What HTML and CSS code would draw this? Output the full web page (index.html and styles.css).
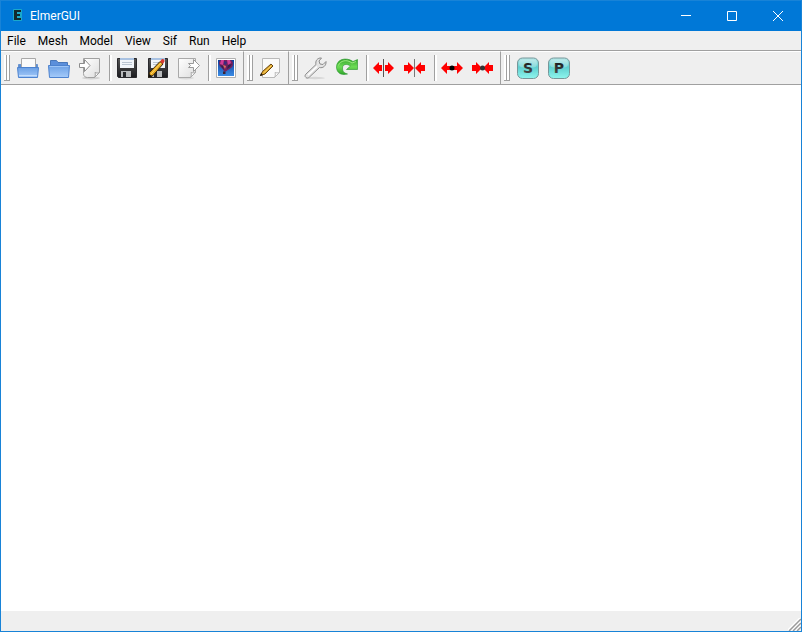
FILE: index.html
```html
<!DOCTYPE html>
<html lang="en">
<head>
<meta charset="utf-8">
<title>ElmerGUI</title>
<link rel="stylesheet" href="styles.css">
</head>
<body>
<svg class="defs" aria-hidden="true">
  <defs>
    <linearGradient id="blue" x1="0" y1="0" x2="0" y2="1"><stop offset="0" stop-color="#6a9fe4"/><stop offset="1" stop-color="#a5cbfa"/></linearGradient>
    <linearGradient id="paper" x1="0" y1="0" x2="1" y2="1"><stop offset="0" stop-color="#fff"/><stop offset="1" stop-color="#dedede"/></linearGradient>
    <linearGradient id="dark" x1="0" y1="0" x2="0" y2="1"><stop offset="0" stop-color="#555"/><stop offset="1" stop-color="#1c1c20"/></linearGradient>
    <linearGradient id="sky" x1="0" y1="0" x2="0" y2="1"><stop offset="0" stop-color="#0b3f9c"/><stop offset="1" stop-color="#3a8be4"/></linearGradient>
    <linearGradient id="green" x1="0" y1="0" x2="0" y2="1"><stop offset="0" stop-color="#35a52c"/><stop offset=".5" stop-color="#6ddc55"/><stop offset="1" stop-color="#2fa52a"/></linearGradient>
    <linearGradient id="aqua" x1="0" y1="0" x2="0" y2="1"><stop offset="0" stop-color="#b5e6e6"/><stop offset=".45" stop-color="#5fcfd0"/><stop offset="1" stop-color="#8ff6ee"/></linearGradient>
    <linearGradient id="ink" x1="0" y1="0" x2="0" y2="1"><stop offset="0" stop-color="#111"/><stop offset="1" stop-color="#555"/></linearGradient>
    <g id="floppy">
      <path d="M2.500 2.500h19v19h-18l-1-1z" fill="url(#dark)" stroke="#29292d"/>
      <path d="M5 2h14v10H5z" fill="#f1f5fa"/>
      <path d="M5 2h14v2H5z" fill="#a9c2e2"/>
      <path d="M7 6.500h10M7 8.500h10" stroke="#bac5d2"/>
      <path d="M6 15h10v6H6z" fill="#b9bbbd"/>
      <path d="M8 16h3v5H8z" fill="#27282c"/>
    </g>
    <path id="arrow-left" d="M0 6 6 0v3h4v6H6v3z" fill="#f00"/>
    <path id="arrow-right" d="M10 6 4 0v3H0v6h4v3z" fill="#f00"/>
    <path id="edge-left" d="M0 6 6 0v4h4v4H6v4z" fill="#f00"/>
    <path id="edge-right" d="M10 6 4 0v4H0v4h4v4z" fill="#f00"/>
  </defs>
</svg>
<div class="window">
  <header class="titlebar">
    <svg class="app-icon" viewBox="0 0 16 16" aria-hidden="true"><rect x="4" y="1" width="9" height="12" rx="1" fill="#1aa9cc"/><path d="M5 2h7v2H8v2h3v2H8v2h4v2H5z" fill="#12282f"/></svg>
    <h1 class="title">ElmerGUI</h1>
    <div class="controls">
      <button class="control" aria-label="Minimize"><svg viewBox="0 0 10 10"><path d="M0 4.500h10"/></svg></button>
      <button class="control" aria-label="Maximize"><svg viewBox="0 0 10 10"><path d="M.5.5h9v9h-9z"/></svg></button>
      <button class="control" aria-label="Close"><svg viewBox="0 0 10 10"><path d="m0 0 10 10M10 0 0 10"/></svg></button>
    </div>
  </header>
  <nav class="menubar">
    <button class="menu">File</button>
    <button class="menu">Mesh</button>
    <button class="menu">Model</button>
    <button class="menu">View</button>
    <button class="menu">Sif</button>
    <button class="menu">Run</button>
    <button class="menu">Help</button>
  </nav>
  <div class="toolbars">
    <div class="toolbar" role="toolbar" aria-label="File">
      <span class="grip"></span>
      <button class="tool" aria-label="Open"><svg viewBox="0 0 24 24">
        <path d="M2.500 12V8.500h19V12z" fill="#5b8ed4" stroke="#6a93cc"/>
        <path d="M5.500 2.500h14v11h-14z" fill="#fafafa" stroke="#a8a8a8"/>
        <path d="M1.500 11.500h21l-1 10h-19z" fill="url(#blue)" stroke="#4c82cf"/>
        <path d="M3 19.500h18" stroke="#c3ddfc"/>
      </svg></button>
      <button class="tool" aria-label="Load project"><svg viewBox="0 0 24 24">
        <path d="M3.500 12V4.500h6l1.500 2h9.500V12z" fill="#5b8fdb" stroke="#4877b9"/>
        <path d="M1.500 9.500h21l-1 12h-19z" fill="url(#blue)" stroke="#4c82cf"/>
        <path d="M2.500 10.500h19" stroke="#9cc4f6"/>
      </svg></button>
      <button class="tool" aria-label="Import mesh"><svg viewBox="0 0 24 24">
        <ellipse cx="13" cy="22" rx="9" ry="1.500" fill="#d2d2d2"/>
        <path d="M5.500 2.500h16v14l-5 5h-7c-2 0-4-1-4-4z" fill="url(#paper)" stroke="#a0a0a0"/>
        <path d="M21.500 16.500c-2 1-3 .5-4.500 0 .5 2 .5 3-.5 5z" fill="#fff" stroke="#a0a0a0"/>
        <path d="M1.500 7.500h5v-4l5.500 6-5.500 6v-4h-5z" fill="#fff" stroke="#8d8d8d"/>
      </svg></button>
      <span class="separator"></span>
      <button class="tool" aria-label="Save"><svg viewBox="0 0 24 24"><use href="#floppy"/></svg></button>
      <button class="tool" aria-label="Save as"><svg viewBox="0 0 24 24"><use href="#floppy"/>
        <path d="m2.500 21.500 1-5L14 5.500l3 2.500L7 19.500z" fill="#e8aa22" stroke="#35240c"/>
        <path d="M5 18 15 7" stroke="#ffda6b"/>
        <path d="m14 5.500 2-2.500c1.500-.5 3 1 2.500 2.500L17 8z" fill="#d83c32"/>
        <path d="m2 22 1-4 3 2z" fill="#111"/>
      </svg></button>
      <button class="tool" aria-label="Export mesh"><svg viewBox="0 0 24 24">
        <ellipse cx="9" cy="22" rx="8" ry="1.500" fill="#dadada"/>
        <path d="M1.500 2.500h17v14l-5 5h-12z" fill="url(#paper)" stroke="#a9a9a9"/>
        <path d="M18.500 16.500c-2 .5-3 .5-4.500 0 .5 2 .5 3-.5 5z" fill="#fff" stroke="#aaa"/>
        <path d="M11.500 7.500h5v-4l6 6-6 6v-4h-5l2-2z" fill="#fff" stroke="#9a9a9a"/>
      </svg></button>
      <span class="separator"></span>
      <button class="tool" aria-label="Save picture"><svg viewBox="0 0 24 24">
        <path d="M2.500 2.500h19v19h-19z" fill="#fff" stroke="#b0b0b0"/>
        <path d="M4 4h16v16H4z" fill="url(#sky)"/>
        <path d="M5 7c0-2 1-3 3-3h8c2 0 3 2 3 4 0 4-4 5-7 7.500h-2C9 12 5 11 5 7z" fill="#74205f"/>
        <path d="M7 4h3l-1 5-3-1zM13 4h3l1 3-3 2z" fill="#d23c96"/>
        <path d="m10 5 3 1-1 3-2-1z" fill="#3a2b7c"/>
        <path d="m6 9 3 1 1 4zM14 9l4-1-2 3-3 2z" fill="#35204e"/>
        <path d="m9 9 3 1-1 3z" fill="#d9725c"/>
        <path d="M9 15.500h2.500V18H9z" fill="#3e2332"/>
      </svg></button>
    </div>
    <div class="toolbar" role="toolbar" aria-label="Edit">
      <span class="grip"></span>
      <button class="tool" aria-label="Edit sif"><svg viewBox="0 0 24 24">
        <path d="M3.500 2.500h17v14l-5 5h-12z" fill="#fafafa" stroke="#b9b9b9"/>
        <path d="M20.500 16.500c-2 .5-3 .5-4.500 0 .5 2 .5 3-.5 5z" fill="#fff" stroke="#b9b9b9"/>
        <path d="m1.500 19.500 2-4 8.500-7.500 2 2-8 8z" fill="#dda52c" stroke="#67450f"/>
        <path d="m4.500 17 8-7.500" stroke="#ffd66b"/>
        <path d="m1 20 1-3 2 2z" fill="#241a0e"/>
      </svg></button>
    </div>
    <div class="toolbar" role="toolbar" aria-label="Mesh">
      <span class="grip"></span>
      <button class="tool" aria-label="Configure"><svg viewBox="0 0 24 24">
        <ellipse cx="11" cy="22" rx="10" ry="1.200" fill="#d7d7d7"/>
        <path d="M2 21.500c-1.500-1-1-2.500 0-3.500l10-9.500C11 5 13.500 1.500 17.500 2l-2.500 3 1 3 3 .5 3-3c.5 4-3 7-6.500 6L5.500 21c-1 1-2.500 1.500-3.500.5z" fill="#e4e4e4" stroke="#8c8c8c"/>
        <path d="m4 19 9-8.500" stroke="#fff" stroke-width="1.500"/>
      </svg></button>
      <button class="tool" aria-label="Remesh"><svg viewBox="0 0 24 24">
        <path d="M9 18.500C4 18.500 1.500 15 1.500 11 1.500 3.500 10.500.5 18 5.500l4.500-2v10h-11l4-3.500C12 7.500 7.500 8 7.500 12c0 3 1 5 5 6z" fill="url(#green)" stroke="#24942a" stroke-opacity=".6"/>
        <path d="M3.500 9.500C5 4.500 12 3 17 7l4-1.500" fill="none" stroke="#9beb80"/>
      </svg></button>
      <span class="separator"></span>
      <button class="tool" aria-label="Divide surface"><svg viewBox="0 0 24 24"><use href="#arrow-left" x="1" y="6"/><use href="#arrow-right" x="12" y="6"/><path d="M10 6h3v12h-3z" fill="#efefef"/><path d="M11.500 3v18" stroke="#555"/></svg></button>
      <button class="tool" aria-label="Unify surface"><svg viewBox="0 0 24 24"><use href="#arrow-right" x="1" y="6"/><use href="#arrow-left" x="12" y="6"/><path d="M11.500 3v18" stroke="#777"/></svg></button>
      <span class="separator"></span>
      <button class="tool" aria-label="Divide edge"><svg viewBox="0 0 24 24"><use href="#edge-left" x="1" y="6"/><use href="#edge-right" x="13" y="6"/><path d="M10 11h4v2h-4z" fill="#400"/><circle cx="12" cy="12" r="2.500"/></svg></button>
      <button class="tool" aria-label="Unify edge"><svg viewBox="0 0 24 24"><use href="#arrow-right" x="1" y="6"/><use href="#arrow-left" x="12" y="6"/><circle cx="11.500" cy="12" r="2.500" fill="#333"/></svg></button>
    </div>
    <div class="toolbar toolbar-last" role="toolbar" aria-label="Solver">
      <span class="grip"></span>
      <button class="tool" aria-label="Start solver"><svg viewBox="0 0 24 24">
        <rect x="1.500" y="2" width="21" height="20.500" rx="5" fill="url(#aqua)" stroke="#76979a"/>
        <rect x="3" y="3.500" width="18" height="8" rx="4" fill="#fff" opacity=".25"/>
        <text class="letter" x="12" y="17">S</text>
      </svg></button>
      <button class="tool" aria-label="Start postprocessor"><svg viewBox="0 0 24 24">
        <rect x="1.500" y="2" width="21" height="20.500" rx="5" fill="url(#aqua)" stroke="#76979a"/>
        <rect x="3" y="3.500" width="18" height="8" rx="4" fill="#fff" opacity=".25"/>
        <text class="letter" x="12" y="17">P</text>
      </svg></button>
    </div>
  </div>
  <main class="viewport"></main>
  <footer class="statusbar">
    <svg class="size-grip" viewBox="0 0 13 13" aria-hidden="true"><path d="M0 13 13 0M4 13l9-9M8 13l5-5" stroke="#fff" stroke-width="3"/><path d="M1 13 13 1M5 13l8-8M9 13l4-4" stroke="#9b9b9b" stroke-width="1.500"/></svg>
  </footer>
</div>
</body>
</html>
```
FILE: styles.css
```css
* {
  box-sizing: border-box;
}

body {
  margin: 0;
  font: 12px/16px Roboto, "Open Sans", sans-serif;
  color: #000;
}

button {
  margin: 0;
  padding: 0;
  border: 0;
  background: none;
  font: inherit;
  color: inherit;
}

svg {
  display: block;
}

.defs {
  position: absolute;
  width: 0;
  height: 0;
}

.window {
  display: flex;
  flex-direction: column;
  min-height: 100vh;
  border: 1px solid #1883d7;
  background: #efefef;
}

.titlebar {
  display: flex;
  align-items: center;
  height: 30px;
  padding-left: 8px;
  background: #0078d7;
  color: #fff;
}

.app-icon {
  width: 16px;
  height: 16px;
}

.title {
  flex: 1;
  margin: 0;
  padding-left: 5px;
  font-size: 12px;
  font-weight: 400;
}

.controls {
  display: flex;
}

.control {
  display: grid;
  place-items: center;
  width: 46px;
  height: 28px;
}

.control svg {
  width: 10px;
  height: 10px;
  fill: none;
  stroke: #fff;
}

.menubar {
  display: flex;
  height: 19px;
}

.menu {
  padding: 0 6px;
}

.toolbars {
  display: flex;
  height: 35px;
  border-top: 1px solid #a0a0a0;
  border-bottom: 1px solid #a0a0a0;
}

.toolbar {
  display: flex;
  align-items: center;
  padding: 0 2px 0 3px;
  border-top: 1px solid #fff;
  border-right: 1px solid #a0a0a0;
}

.toolbar-last {
  flex: 1;
  border-right: 0;
}

.grip {
  display: flex;
  width: 6px;
  height: 26px;
  margin-right: 2px;
}

.grip::before,
.grip::after {
  content: "";
  width: 3px;
  border: solid #a0a0a0;
  border-width: 0 1px 1px 0;
  background: #fff;
}

.separator {
  width: 6px;
  height: 26px;
  padding-left: 4px;
}

.separator::before {
  content: "";
  display: block;
  width: 2px;
  height: 26px;
  border-left: 1px solid #a0a0a0;
  background: #fff;
}

.tool {
  width: 31px;
  height: 30px;
  padding: 0 3px 0 4px;
}

.tool svg {
  width: 24px;
  height: 24px;
}

.letter {
  font: bold 14px "DejaVu Sans", sans-serif;
  text-anchor: middle;
  fill: url(#ink);
}

.viewport {
  flex: 1;
  background: #fff;
}

.statusbar {
  display: flex;
  align-items: flex-end;
  justify-content: flex-end;
  height: 20px;
}

.size-grip {
  width: 13px;
  height: 13px;
}
```
